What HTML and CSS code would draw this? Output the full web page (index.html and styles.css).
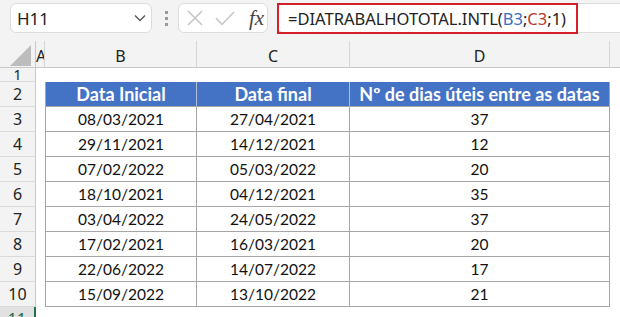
FILE: index.html
```html
<!DOCTYPE html>
<html lang="pt">
<head>
<meta charset="utf-8">
<link rel="stylesheet" href="styles.css">
</head>
<body>
<div class="app">
  <div class="topbar">
    <div class="namebox">
      <span class="name">H11</span>
      <svg class="chev" width="12" height="8" viewBox="0 0 12 8"><polyline points="1,1.5 6,6.5 11,1.5" fill="none" stroke="#555" stroke-width="1.3"/></svg>
    </div>
    <div class="dots"><i></i><i></i><i></i></div>
    <div class="fxbox">
      <svg class="ic" width="16" height="16" viewBox="0 0 16 16"><path d="M1 1 L15 15 M15 1 L1 15" stroke="#c4c4c4" stroke-width="1.5" fill="none"/></svg>
      <svg class="ic" width="20" height="16" viewBox="0 0 20 16"><polyline points="1,8 7,14.5 19,2" fill="none" stroke="#c4c4c4" stroke-width="1.5"/></svg>
      <span class="fx">fx</span>
    </div>
    <div class="formula">
      <span class="hl">=DIATRABALHOTOTAL.INTL(<span class="ref-b">B3</span>;<span class="ref-c">C3</span>;1)</span>
    </div>
  </div>
  <div class="sheet">
    <div class="corner"><svg width="22" height="21" viewBox="0 0 22 21"><polygon points="0,21 21,0 21,21" fill="#bdbdbd"/></svg></div>
    <div class="ch cha">A</div>
    <div class="ch">B</div>
    <div class="ch">C</div>
    <div class="ch">D</div>
    <div class="ch che"></div>

    <div class="rh rh1"><span>1</span></div>
    <div class="c"></div><div class="c"></div><div class="c"></div><div class="c"></div><div class="c"></div>

    <div class="rh">2</div>
    <div class="c"></div>
    <div class="th first">Data Inicial</div>
    <div class="th">Data final</div>
    <div class="th last">Nº de dias úteis entre as datas</div>
    <div class="c"></div>

    <div class="rh">3</div><div class="c"></div>
    <div class="td first">08/03/2021</div><div class="td">27/04/2021</div><div class="td">37</div><div class="c"></div>

    <div class="rh">4</div><div class="c"></div>
    <div class="td first">29/11/2021</div><div class="td">14/12/2021</div><div class="td">12</div><div class="c"></div>

    <div class="rh">5</div><div class="c"></div>
    <div class="td first">07/02/2022</div><div class="td">05/03/2022</div><div class="td">20</div><div class="c"></div>

    <div class="rh">6</div><div class="c"></div>
    <div class="td first">18/10/2021</div><div class="td">04/12/2021</div><div class="td">35</div><div class="c"></div>

    <div class="rh">7</div><div class="c"></div>
    <div class="td first">03/04/2022</div><div class="td">24/05/2022</div><div class="td">37</div><div class="c"></div>

    <div class="rh">8</div><div class="c"></div>
    <div class="td first">17/02/2021</div><div class="td">16/03/2021</div><div class="td">20</div><div class="c"></div>

    <div class="rh">9</div><div class="c"></div>
    <div class="td first">22/06/2022</div><div class="td">14/07/2022</div><div class="td">17</div><div class="c"></div>

    <div class="rh">10</div><div class="c"></div>
    <div class="td first">15/09/2022</div><div class="td">13/10/2022</div><div class="td">21</div><div class="c"></div>

    <div class="rh rh-sel">11</div>
    <div class="c"></div><div class="c"></div><div class="c"></div><div class="c"></div><div class="c"></div>
  </div>
</div>
</body>
</html>
```
FILE: styles.css
```css
* { box-sizing: border-box; }
html, body { margin: 0; padding: 0; }
body {
  width: 620px;
  height: 317px;
  overflow: hidden;
  background: #f3f3f3;
  font-family: "Noto Sans", "Open Sans", sans-serif;
  color: #222;
}
.app { width: 620px; height: 317px; overflow: hidden; }

.topbar {
  height: 41px;
  display: flex;
  align-items: flex-start;
  padding: 3px 0 0 10px;
}
.namebox {
  width: 142px;
  height: 30px;
  background: #fff;
  border: 1px solid #dcdcdc;
  border-radius: 6px;
  display: flex;
  align-items: center;
  justify-content: space-between;
  padding: 0 5px 0 6px;
}
.name { font-size: 17px; color: #222; }
.chev { display: block; }
.dots {
  width: 26px;
  height: 30px;
  display: flex;
  flex-direction: column;
  align-items: center;
  justify-content: center;
  gap: 3px;
  padding-left: 2px;
}
.dots i { display: block; width: 3px; height: 3px; background: #9a9a9a; }
.fxbox {
  width: 90px;
  height: 30px;
  background: #fff;
  border: 1px solid #dcdcdc;
  border-radius: 6px;
  display: flex;
  align-items: center;
  padding: 0 0 0 8px;
}
.fxbox .ic { display: block; margin-right: 12px; }
.fxbox .ic + .ic { margin-right: 14px; }
.fx {
  font-family: "Liberation Serif", "DejaVu Serif", serif;
  font-style: italic;
  font-size: 21px;
  color: #444;
}
.formula {
  flex: 1;
  margin-left: 9px;
  height: 30px;
  background: #fff;
  border: 1px solid #dcdcdc;
  border-right: none;
  border-radius: 6px 0 0 6px;
  display: flex;
}
.hl {
  display: flex;
  align-items: center;
  width: 301px;
  height: 31px;
  margin: -1px 0 0 -1px;
  border: 2px solid #d42129;
  padding-left: 9px;
  font-size: 16.5px;
  color: #222;
  white-space: nowrap;
}
.ref-b { color: #3a6fc0; }
.ref-c { color: #b83a2e; }

.sheet {
  display: grid;
  grid-template-columns: 36px 9px 152px 153px 260px 1fr;
  grid-template-rows: 27px 14px repeat(10, 25px);
  background: #fff;
}
.corner {
  background: #f3f3f3;
  border-right: 1px solid #c8c8c8;
  border-bottom: 1px solid #c8c8c8;
  display: flex;
  align-items: flex-end;
  justify-content: flex-end;
  padding: 0 3px 1px 0;
}
.corner svg { display: block; }
.ch {
  background: #f3f3f3;
  border-right: 1px solid #d6d6d6;
  border-bottom: 1px solid #c8c8c8;
  display: flex;
  align-items: center;
  justify-content: center;
  padding-top: 3px;
  font-size: 16px;
  color: #222;
  overflow: hidden;
}
.cha { justify-content: flex-start; }
.che { border-right: none; }

.rh {
  background: #f3f3f3;
  border-right: 1px solid #c8c8c8;
  border-bottom: 1px solid #dadada;
  display: flex;
  align-items: center;
  justify-content: center;
  font-size: 16px;
  color: #222;
  overflow: hidden;
}
.rh1 { align-items: flex-start; }
.rh1 span { display: block; font-size: 14px; line-height: 14px; }
.rh-sel {
  background: #e1e1e1;
  color: #1f6b40;
  border-right: 2px solid #217346;
  align-items: flex-start;
  padding-top: 1px;
}
.c { background: #fff; }

.th, .td {
  display: flex;
  align-items: center;
  justify-content: center;
  font-family: "Lato", "Open Sans", sans-serif;
  white-space: nowrap;
  border-right: 1px solid #a6a6a6;
  border-bottom: 1px solid #a6a6a6;
}
.first { border-left: 1px solid #a6a6a6; }
.th {
  background: #4472c4;
  color: #fff;
  font-weight: 700;
  font-size: 18px;
  border-right-color: #b4c1d9;
}
.th.last { border-right-color: #a6a6a6; }
.td { color: #111; font-size: 15.5px; }
```
